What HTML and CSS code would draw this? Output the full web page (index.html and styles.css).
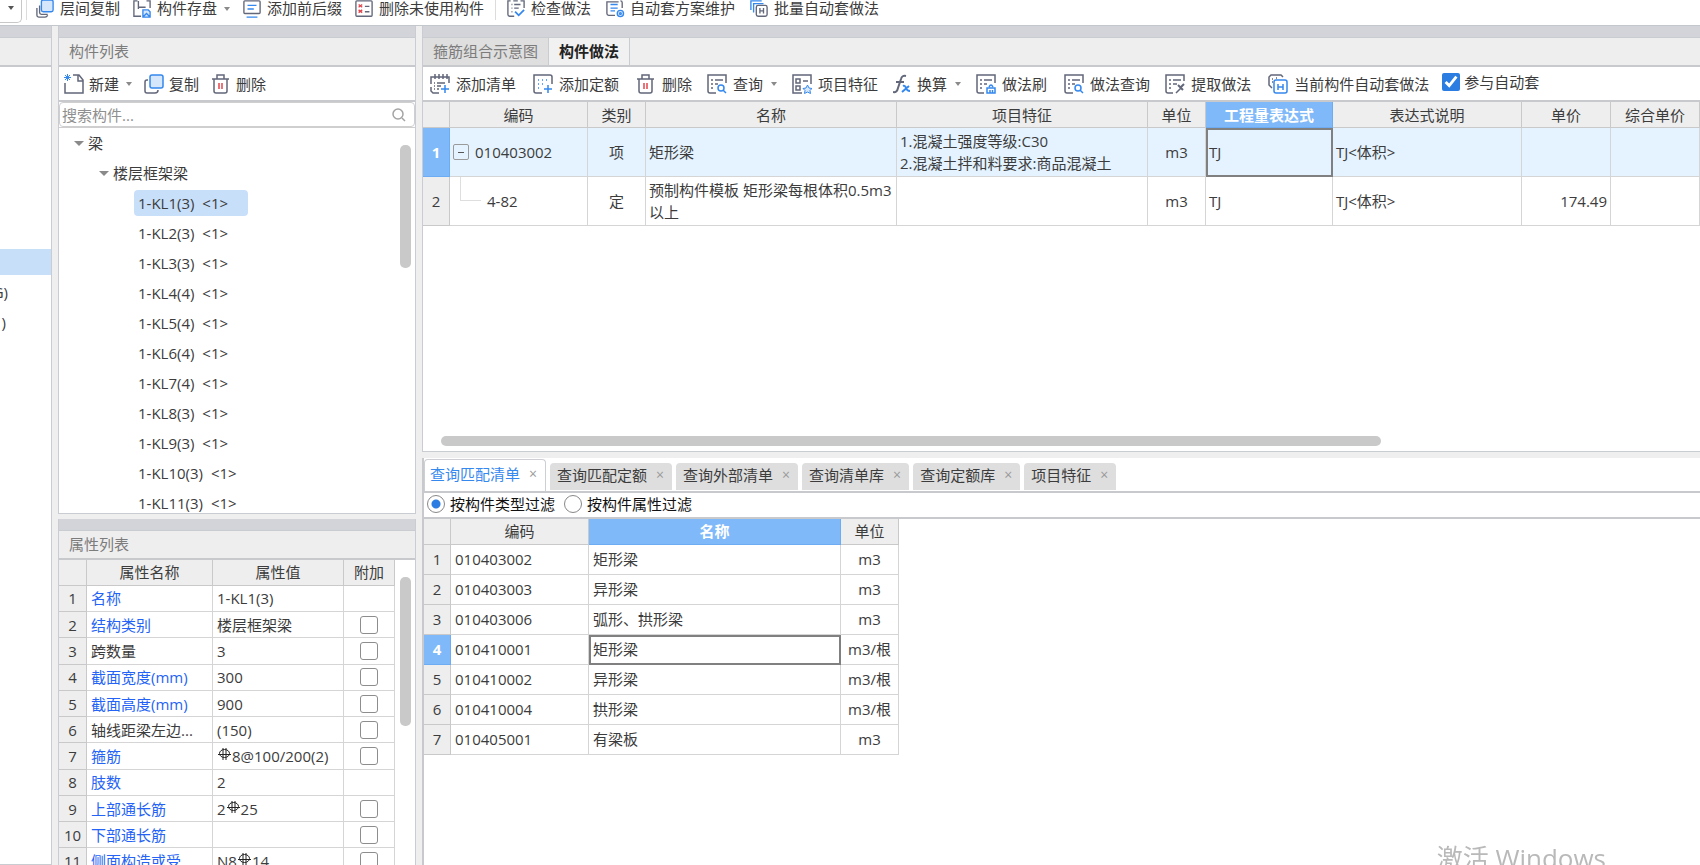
FILE: index.html
```html
<!DOCTYPE html>
<html lang="zh-CN">
<head>
<meta charset="utf-8">
<title>构件做法</title>
<link rel="stylesheet" href="styles.css">
</head>
<body>
<svg class="symbols" aria-hidden="true">
  <symbol id="i-copy" viewBox="0 0 20 20"><path class="d" d="M4 6H3a2 2 0 0 0-2 2v9a2 2 0 0 0 2 2h8a3 3 0 0 0 3-3"/><rect class="f" x="6" y="1" width="13" height="13" rx="2"/></symbol>
  <symbol id="i-layers" viewBox="0 0 20 20"><path class="d" d="M1 9v8q0 2 2 2h7q2 0 3-2M4 6v8q0 2 2 2h7"/><rect class="f" x="6" y="0" width="13" height="13" rx="2"/></symbol>
  <symbol id="i-save" viewBox="0 0 20 20"><path class="d" d="M5 1H1v17h8M6 1v9M6 8h8M15 1h4v8"/><path class="f" d="M11 11h6l2 2v6h-8zM11 19l4-4 4 4"/></symbol>
  <symbol id="i-affix" viewBox="0 0 20 20"><rect class="d" x="1" y="1" width="18" height="14" rx="1"/><path class="b" d="M5 6h10M5 10h7M4 19h12"/></symbol>
  <symbol id="i-unused" viewBox="0 0 20 20"><rect class="d" x="1" y="1" width="18" height="17" rx="1"/><path class="r" d="M4 5l4 3M8 5L4 8M4 11l4 3M8 11l-4 3"/><path class="d" d="M11 7h5M11 13h5"/></symbol>
  <symbol id="i-check" viewBox="0 0 20 20"><path class="d" d="M8 18H3q-2 0-2-2V1h3M7 1h5M15 1h4v8M5 5h1M8 5h7M5 9h1M8 9h5M5 13h1"/><path class="b w" d="M9 13l4 4 6-6"/></symbol>
  <symbol id="i-scheme" viewBox="0 0 20 20"><path class="d" d="M10 17H3q-2 0-2-2V2h13M16 1q2 0 2 2v6"/><path class="b" d="M5 5h8M5 9h8M5 12h5"/><circle class="f" cx="16" cy="15" r="3.500"/><circle class="b" cx="16" cy="15" r="1"/></symbol>
  <symbol id="i-batch" viewBox="0 0 20 20"><path class="b" d="M1 11V1h12M4 14V4h11"/><rect class="d" x="7" y="6" width="12" height="12" rx="2"/><path class="d" d="M11 9v6M15 9v6M11 12h4"/></symbol>
  <symbol id="i-new" viewBox="0 0 20 20"><path class="d" d="M1 9v10h18V6l-4-5H9M14 1v6h5"/><path class="b n" d="M1 1l5 5M6 1L1 6M3.500 0v7M0 3.500h7"/></symbol>
  <symbol id="i-trash" viewBox="0 0 20 20"><path class="d" d="M1 5h17M6 5V1h7v4M3 5v12q0 2 2 2h9q2 0 2-2V5"/><path class="r" d="M8 9v6M11 9v6"/></symbol>
  <symbol id="i-addlist" viewBox="0 0 20 20"><path class="d" d="M9 19H3l-2-2v-4M1 10V3h18v6M5 0v5M9 0v5M13 0v5M17 0v5M4 9h1M7 9h8M4 12h1M7 12h4M4 15h1M7 15h2"/><path class="b" d="M15 11v8M11 15h8"/></symbol>
  <symbol id="i-addquota" viewBox="0 0 20 20"><path class="d" d="M9 19H3q-2 0-2-2V1h16q2 0 2 2v7"/><path class="b" d="M15 11v8M11 15h8M5 6h1M9 6h1M13 6h1M5 10h1M9 10h1M5 14h1"/></symbol>
  <symbol id="i-query" viewBox="0 0 20 20"><path class="d" d="M9 19H3q-2 0-2-2V1h18v8M4 6h2M8 6h8M4 10h2M8 10h3M4 14h2"/><circle class="b" cx="14" cy="14" r="3"/><path class="b" d="M16 16l3 3"/></symbol>
  <symbol id="i-feature" viewBox="0 0 20 20"><path class="d" d="M10 19H1V1h18v9M4 5h4v4H4zM4 12h4v4H4zM11 7h5"/><path class="f n" d="M15.500 11l1.500 3 3 .5-2 2 .5 3-3-1.500-3 1.500.5-3-2-2 3-.5z"/></symbol>
  <symbol id="i-brush" viewBox="0 0 20 20"><path class="d" d="M8 19H3q-2 0-2-2V1h18v8M4 6h2M8 6h8M4 10h2M8 10h3M4 14h2"/><path class="b" d="M11 19v-5h8v5zM13 13q2-4 4 0M14 19v-3M16.500 19v-3"/></symbol>
  <symbol id="i-extract" viewBox="0 0 20 20"><path class="d" d="M8 19H3q-2 0-2-2V1h18v6M4 6h2M8 6h8M4 10h2M8 10h4M4 14h2M11 19l5-5"/><path class="d w" d="M13 11l5 5M15 14l4-4"/></symbol>
  <symbol id="i-auto" viewBox="0 0 20 20"><path class="d" d="M4 14l-3-3V3l2-2h10l2 2M4 5h1M4 8h1M8 4h1"/><rect class="b" x="6" y="6" width="13" height="13" rx="2"/><path class="b" d="M10 10v6M15 10v6M10 13h5"/></symbol>
  <symbol id="i-fx" viewBox="0 0 18 20"><path class="d w" d="M0 18q4 1 5-4l3-9q1-4 5-3M3 8h8"/><path class="b w" d="M10 12q2-1 3 2t4 3M16 12l-7 6"/></symbol>
  <symbol id="i-search" viewBox="0 0 14 14"><circle class="g" cx="6" cy="6" r="5"/><path class="g" d="M10 10l3 3"/></symbol>
  <symbol id="i-rebar" viewBox="0 0 13 13"><path class="k" d="M5 0v12M8 0v12M0 6.500h13"/><ellipse class="k" cx="6.500" cy="5.500" rx="5" ry="4"/></symbol>
</svg>

<header class="topbar">
  <div class="combo-end"><i class="caret"></i></div>
  <i class="sep"></i>
  <div class="tools top-tools">
    <button><svg class="icon"><use href="#i-layers"/></svg>层间复制</button>
    <button><svg class="icon"><use href="#i-save"/></svg>构件存盘<i class="caret"></i></button>
    <button><svg class="icon"><use href="#i-affix"/></svg>添加前后缀</button>
    <button><svg class="icon"><use href="#i-unused"/></svg>删除未使用构件</button>
  </div>
  <i class="sep"></i>
  <div class="tools check-tools">
    <button><svg class="icon"><use href="#i-check"/></svg>检查做法</button>
    <button><svg class="icon"><use href="#i-scheme"/></svg>自动套方案维护</button>
    <button><svg class="icon"><use href="#i-batch"/></svg>批量自动套做法</button>
  </div>
</header>

<main class="workspace">
  <aside class="panel nav">
    <div class="grip"></div>
    <div class="title"></div>
    <ul class="nav-list">
      <li class="on"></li>
      <li>G)</li>
      <li>)</li>
    </ul>
  </aside>

  <div class="side">
    <section class="panel components">
      <div class="grip"></div>
      <h2 class="title">构件列表</h2>
      <div class="toolbar tools list-tools">
        <button><svg class="icon"><use href="#i-new"/></svg>新建<i class="caret"></i></button>
        <button><svg class="icon"><use href="#i-copy"/></svg>复制</button>
        <button><svg class="icon"><use href="#i-trash"/></svg>删除</button>
      </div>
      <label class="search"><input type="text" placeholder="搜索构件..." aria-label="搜索构件"><svg><use href="#i-search"/></svg></label>
      <div class="scroll-body tree-body">
        <ul class="tree">
          <li class="l1"><i class="caret big"></i>梁</li>
          <li class="l2"><i class="caret big"></i>楼层框架梁</li>
          <li class="l3"><span class="on">1-KL1(3) <b>&lt;1&gt;</b></span></li>
          <li class="l3"><span>1-KL2(3) <b>&lt;1&gt;</b></span></li>
          <li class="l3"><span>1-KL3(3) <b>&lt;1&gt;</b></span></li>
          <li class="l3"><span>1-KL4(4) <b>&lt;1&gt;</b></span></li>
          <li class="l3"><span>1-KL5(4) <b>&lt;1&gt;</b></span></li>
          <li class="l3"><span>1-KL6(4) <b>&lt;1&gt;</b></span></li>
          <li class="l3"><span>1-KL7(4) <b>&lt;1&gt;</b></span></li>
          <li class="l3"><span>1-KL8(3) <b>&lt;1&gt;</b></span></li>
          <li class="l3"><span>1-KL9(3) <b>&lt;1&gt;</b></span></li>
          <li class="l3"><span>1-KL10(3) <b>&lt;1&gt;</b></span></li>
          <li class="l3"><span>1-KL11(3) <b>&lt;1&gt;</b></span></li>
        </ul>
        <div class="rail"><div class="thumb tree-thumb"></div></div>
      </div>
    </section>

    <section class="panel props">
      <div class="grip"></div>
      <h2 class="title">属性列表</h2>
      <div class="scroll-body">
        <table class="grid prop-grid">
          <colgroup><col class="p0"><col class="p1"><col><col class="p3"></colgroup>
          <thead><tr><th></th><th>属性名称</th><th>属性值</th><th>附加</th></tr></thead>
          <tbody>
            <tr><th>1</th><td class="link">名称</td><td>1-KL1(3)</td><td></td></tr>
            <tr><th>2</th><td class="link">结构类别</td><td>楼层框架梁</td><td><input type="checkbox" aria-label="附加 结构类别"></td></tr>
            <tr><th>3</th><td>跨数量</td><td>3</td><td><input type="checkbox" aria-label="附加 跨数量"></td></tr>
            <tr><th>4</th><td class="link">截面宽度(mm)</td><td>300</td><td><input type="checkbox" aria-label="附加 截面宽度"></td></tr>
            <tr><th>5</th><td class="link">截面高度(mm)</td><td>900</td><td><input type="checkbox" aria-label="附加 截面高度"></td></tr>
            <tr><th>6</th><td>轴线距梁左边...</td><td>(150)</td><td><input type="checkbox" aria-label="附加 轴线距梁左边"></td></tr>
            <tr><th>7</th><td class="link">箍筋</td><td><svg class="rebar"><use href="#i-rebar"/></svg>8@100/200(2)</td><td><input type="checkbox" aria-label="附加 箍筋"></td></tr>
            <tr><th>8</th><td class="link">肢数</td><td>2</td><td></td></tr>
            <tr><th>9</th><td class="link">上部通长筋</td><td>2<svg class="rebar"><use href="#i-rebar"/></svg>25</td><td><input type="checkbox" aria-label="附加 上部通长筋"></td></tr>
            <tr><th>10</th><td class="link">下部通长筋</td><td></td><td><input type="checkbox" aria-label="附加 下部通长筋"></td></tr>
            <tr><th>11</th><td class="link">侧面构造或受...</td><td>N8<svg class="rebar"><use href="#i-rebar"/></svg>14</td><td><input type="checkbox" aria-label="附加 侧面构造或受"></td></tr>
          </tbody>
        </table>
        <div class="rail"><div class="thumb prop-thumb"></div></div>
      </div>
    </section>
  </div>

  <div class="content">
    <section class="panel methods">
      <div class="grip"></div>
      <div class="title page-tabs"><button>箍筋组合示意图</button><button class="on">构件做法</button></div>
      <div class="toolbar main-tools">
        <div class="tools">
          <button><svg class="icon"><use href="#i-addlist"/></svg>添加清单</button>
          <button><svg class="icon"><use href="#i-addquota"/></svg>添加定额</button>
          <button><svg class="icon"><use href="#i-trash"/></svg>删除</button>
        </div>
        <div class="tools tight">
          <button><svg class="icon"><use href="#i-query"/></svg>查询<i class="caret"></i></button>
          <button><svg class="icon"><use href="#i-feature"/></svg>项目特征</button>
          <button><svg class="icon fx"><use href="#i-fx"/></svg>换算<i class="caret"></i></button>
        </div>
        <div class="tools">
          <button><svg class="icon"><use href="#i-brush"/></svg>做法刷</button>
          <button><svg class="icon"><use href="#i-query"/></svg>做法查询</button>
        </div>
        <div class="tools">
          <button><svg class="icon"><use href="#i-extract"/></svg>提取做法</button>
          <button><svg class="icon"><use href="#i-auto"/></svg>当前构件自动套做法</button>
        </div>
        <label class="join"><input type="checkbox" checked>参与自动套</label>
      </div>
      <div class="table-area">
        <table class="grid method-grid">
          <colgroup><col class="m0"><col class="m1"><col class="m2"><col class="m3"><col class="m3"><col class="m2"><col class="m6"><col class="m7"><col class="m8"><col class="m8"><col></colgroup>
          <thead><tr><th></th><th>编码</th><th>类别</th><th>名称</th><th>项目特征</th><th>单位</th><th class="sel">工程量表达式</th><th>表达式说明</th><th>单价</th><th>综合单价</th><th></th></tr></thead>
          <tbody>
            <tr class="current"><th class="sel">1</th><td class="code"><div><button class="fold" aria-label="收起"></button>010403002</div></td><td class="c">项</td><td>矩形梁</td><td>1.混凝土强度等级:C30<br>2.混凝土拌和料要求:商品混凝土</td><td class="c">m3</td><td class="focus">TJ</td><td>TJ&lt;体积&gt;</td><td></td><td></td><td></td></tr>
            <tr><th>2</th><td class="code"><div><i class="branch"></i>4-82</div></td><td class="c">定</td><td>预制构件模板 矩形梁每根体积0.5m3以上</td><td></td><td class="c">m3</td><td>TJ</td><td>TJ&lt;体积&gt;</td><td class="num">174.49</td><td></td><td></td></tr>
          </tbody>
        </table>
      </div>
      <div class="hrail"><div class="hthumb"></div></div>
    </section>

    <section class="lookup">
      <nav class="query-tabs">
        <button class="on">查询匹配清单<i>×</i></button>
        <button>查询匹配定额<i>×</i></button>
        <button>查询外部清单<i>×</i></button>
        <button>查询清单库<i>×</i></button>
        <button>查询定额库<i>×</i></button>
        <button>项目特征<i>×</i></button>
      </nav>
      <div class="filters">
        <label><input type="radio" name="filter" checked>按构件类型过滤</label>
        <label><input type="radio" name="filter">按构件属性过滤</label>
      </div>
      <table class="grid match-grid">
        <colgroup><col class="m0"><col class="m1"><col class="q2"><col class="m2"></colgroup>
        <thead><tr><th></th><th>编码</th><th class="sel">名称</th><th>单位</th></tr></thead>
        <tbody>
          <tr><th>1</th><td>010403002</td><td>矩形梁</td><td class="c">m3</td></tr>
          <tr><th>2</th><td>010403003</td><td>异形梁</td><td class="c">m3</td></tr>
          <tr><th>3</th><td>010403006</td><td>弧形、拱形梁</td><td class="c">m3</td></tr>
          <tr><th class="sel">4</th><td>010410001</td><td class="focus">矩形梁</td><td class="c">m3/根</td></tr>
          <tr><th>5</th><td>010410002</td><td>异形梁</td><td class="c">m3/根</td></tr>
          <tr><th>6</th><td>010410004</td><td>拱形梁</td><td class="c">m3/根</td></tr>
          <tr><th>7</th><td>010405001</td><td>有梁板</td><td class="c">m3</td></tr>
        </tbody>
      </table>
    </section>
  </div>
</main>
<div class="watermark">激活 Windows</div>
</body>
</html>
```

FILE: styles.css
```css
* { box-sizing: border-box; }
body {
  margin: 0;
  height: 100vh;
  overflow: hidden;
  display: flex;
  flex-direction: column;
  background: #efefef;
  color: #3c3c3c;
  font: 15px/22px "Open Sans", "Noto Sans CJK SC", sans-serif;
}
ul, h2 { margin: 0; padding: 0; list-style: none; font: inherit; }
button { margin: 0; padding: 0; border: 0; background: none; font: inherit; color: inherit; white-space: nowrap; }
input { margin: 0; font: inherit; }
i { font-style: normal; }

/* Icons */
.symbols { position: absolute; width: 0; height: 0; }
.d, .b, .r, .f, .g, .k { fill: none; stroke: #62677a; stroke-width: 1.5; }
.b { stroke: #3588ee; }
.r { stroke: #e2454c; }
.f { stroke: #3588ee; fill: #d6e6fb; }
.g { stroke: #a4a4a4; }
.k { stroke: #222; stroke-width: 1; }
.w { stroke-width: 2; }
.n { stroke-width: 1; }
.icon { width: 20px; height: 20px; flex: none; }
.icon.fx { width: 18px; }
.caret { border: 3px solid transparent; border-top: 4px solid #8a8a8a; border-bottom: 0; }
.caret.big { border-width: 5px 5px 0; }

/* Toolbars */
.tools { display: flex; align-items: center; gap: 17px; }
.tools button { display: flex; align-items: center; gap: 6px; }
.tools .caret { margin-left: 2px; }
.tight { gap: 15px; }
.topbar { height: 25px; flex: none; display: flex; align-items: flex-start; background: #fff; }
.topbar .tools { height: 17px; }
.topbar .tools button { gap: 5px; height: 17px; line-height: 17px; }
.topbar .icon { height: 18px; }
.combo-end { width: 22px; height: 23px; padding: 6px 0 0 8px; border: solid #c8c8c8; border-width: 0 1px 1px 0; border-radius: 0 0 5px 0; }
.combo-end .caret { display: block; width: 0; border-top-color: #555; }
.sep { width: 1px; height: 20px; background: #dcdcdc; margin-left: 4px; }
.top-tools { gap: 12px; padding: 0 7px 0 8px; }
.topbar .check-tools { gap: 14px; padding-left: 10px; }

/* Docked panels */
.workspace { flex: 1; min-height: 0; display: flex; gap: 6px; border-top: 1px solid #c4c7cb; }
.panel { display: flex; flex-direction: column; min-height: 0; background: #fff; border: solid #c9ccd0; border-width: 0 1px 1px; }
.grip { height: 12px; flex: none; background: #d3d4d9; border-bottom: 1px solid #c9ccd0; }
.title { height: 29px; flex: none; padding: 2px 10px; background: #eee; border-bottom: 2px solid #c7c9cd; color: #7c7c7c; }
.nav { width: 52px; flex: none; border-left: 0; }
.nav-list { padding-top: 180px; }
.nav-list li { height: 26px; margin: 2px 0 4px; line-height: 26px; width: 8px; display: flex; justify-content: flex-end; }
.nav-list li + li + li { width: 6px; }
.nav-list .on { width: 100%; background: #c8dffa; }
.side { width: 358px; flex: none; display: flex; flex-direction: column; gap: 5px; }
.components { flex: 488 1 0; }
.props { flex: 347 1 0; border-bottom: 0; }
.toolbar { height: 35px; flex: none; border-bottom: 2px solid #c7c9cd; }
.list-tools { gap: 12px; padding-left: 5px; }
.tools.list-tools button { gap: 5px; }
.search { height: 25px; flex: none; display: flex; align-items: center; border: 1px solid #cfcfcf; border-radius: 4px; padding: 0 8px 0 2px; }
.search input { flex: 1; min-width: 0; border: 0; padding: 0; outline: 0; background: none; }
.search input::placeholder { color: #8f8f8f; opacity: 1; }
.search svg { width: 14px; height: 14px; }
.scroll-body { flex: 1; min-height: 0; display: flex; overflow: hidden; }
.tree-body { border-top: 1px solid #cfcfcf; }
.rail { width: 20px; flex: none; padding: 17px 4px 0 5px; }
.thumb { background: #c9c9c9; border-radius: 5px; }
.tree-thumb { height: 123px; }
.prop-thumb { height: 149px; }
.tree { flex: 1; }
.tree li { height: 30px; display: flex; align-items: center; gap: 4px; }
.tree .l1 { padding-left: 15px; }
.tree .l2 { padding-left: 40px; }
.tree .l3 { padding-left: 75px; }
.tree span { width: 114px; height: 26px; padding: 0 4px; line-height: 26px; border-radius: 4px; }
.tree .on { background: #c8dffa; }
.tree b { font-weight: normal; margin-left: 4px; }

/* Data grids */
.grid { table-layout: fixed; border-collapse: separate; border-spacing: 0; }
.grid th, .grid td { padding: 0 4px 0 3px; border: solid #d5d5d5; border-width: 0 1px 1px 0; font-weight: normal; text-align: left; white-space: nowrap; overflow: hidden; }
.grid th { background: #eee; border-color: #c9c9c9; text-align: center; padding: 0; }
.grid thead th { height: 26px; }
.grid .sel { background: #80b9f9; border-color: #6dabf2; color: #fff; font-weight: bold; }
.grid .c { text-align: center; padding: 0; }
.grid .num { text-align: right; padding-right: 3px; }
.grid .focus { outline: 2px solid #808080; outline-offset: -2px; }
.m0 { width: 27px; }
.m1 { width: 138px; }
.m2 { width: 58px; }
.m3 { width: 251px; }
.m6 { width: 127px; }
.m7 { width: 189px; }
.m8 { width: 89px; }
.q2 { width: 252px; }
.p0 { width: 28px; }
.p1 { width: 126px; }
.p3 { width: 51px; }
.prop-grid { flex: 1; width: 336px; height: 315px; }
.prop-grid td { padding: 0 4px; }
.prop-grid td:last-child { padding: 0; }
.prop-grid input { display: block; appearance: none; width: 18px; height: 18px; margin: 0 auto; border: 1px solid #8d8d8d; border-radius: 3px; background: #fff; }
.link { color: #2463f5; }
.rebar { width: 13px; height: 13px; margin: 0 1px; vertical-align: 1px; }

/* Methods panel */
.content { flex: 1; min-width: 0; display: flex; flex-direction: column; gap: 6px; }
.methods { flex: 426 1 0; border-right: 0; }
.page-tabs { display: flex; padding: 0; }
.page-tabs button { padding: 0 10px 2px; border-right: 1px solid #c9ccd0; background: #dfdfdf; }
.page-tabs .on { background: #f1f1f1; color: #222; font-weight: bold; }
.main-tools { display: flex; align-items: center; gap: 15px; padding-left: 7px; white-space: nowrap; }
.join { display: flex; align-items: center; gap: 4px; padding-bottom: 4px; margin-left: -2px; }
.join input { width: 18px; height: 18px; accent-color: #2b7de1; }
.table-area { flex: 1; min-height: 0; overflow: hidden; }
.method-grid { width: 100%; }
.method-grid tbody tr { height: 49px; }
.method-grid tbody td { white-space: normal; }
.current td { background: #e4f3ff; }
.code div { display: flex; align-items: center; height: 48px; gap: 6px; }
.fold { width: 16px; height: 16px; border: 1px solid #9a9a9a; border-radius: 2px; display: flex; align-items: center; justify-content: center; }
.fold::before { content: ""; width: 6px; height: 1px; background: #555; }
.branch { width: 21px; height: 24px; align-self: flex-start; margin-left: 7px; border: solid #dedede; border-width: 0 0 1px 1px; }
.hrail { height: 15px; flex: none; padding: 0 25% 0 18px; }
.hthumb { height: 10px; border-radius: 5px; background: #c9c9c9; }

/* Lookup panel */
.lookup { flex: 408 1 0; min-height: 0; background: #fff; border-left: 2px solid #c7c9cd; }
.query-tabs { height: 35px; display: flex; align-items: flex-end; gap: 4px; border-bottom: 2px solid #c7c9cd; }
.query-tabs button { height: 27px; margin-bottom: 1px; padding: 0 8px 2px 7px; display: flex; align-items: center; gap: 9px; background: #dedede; border-radius: 4px 4px 0 0; }
.query-tabs i { color: #9a9a9a; font-size: 14px; }
.query-tabs .on { height: 32px; margin-bottom: 0; padding: 0 8px 2px 5px; background: #fff; color: #3588ee; border: 1px solid #cdcfd4; border-bottom: 0; }
.filters { height: 26px; display: flex; align-items: center; gap: 9px; padding: 0 3px 2px; border-bottom: 2px solid #c7c9cd; color: #111; }
.filters label { display: flex; align-items: center; gap: 5px; }
.filters input { appearance: none; width: 18px; height: 18px; border: 1px solid #888; border-radius: 50%; background: #fff; }
.filters input:checked { background: radial-gradient(circle, #2b7de1 4px, #fff 5px); }
.match-grid { width: 475px; }
.match-grid tbody tr { height: 30px; }
.match-grid tbody td:not(.c) { padding-left: 4px; }

.watermark { position: fixed; right: 94px; bottom: -13px; font-size: 26px; line-height: 40px; color: #b9b9b9; }
```
